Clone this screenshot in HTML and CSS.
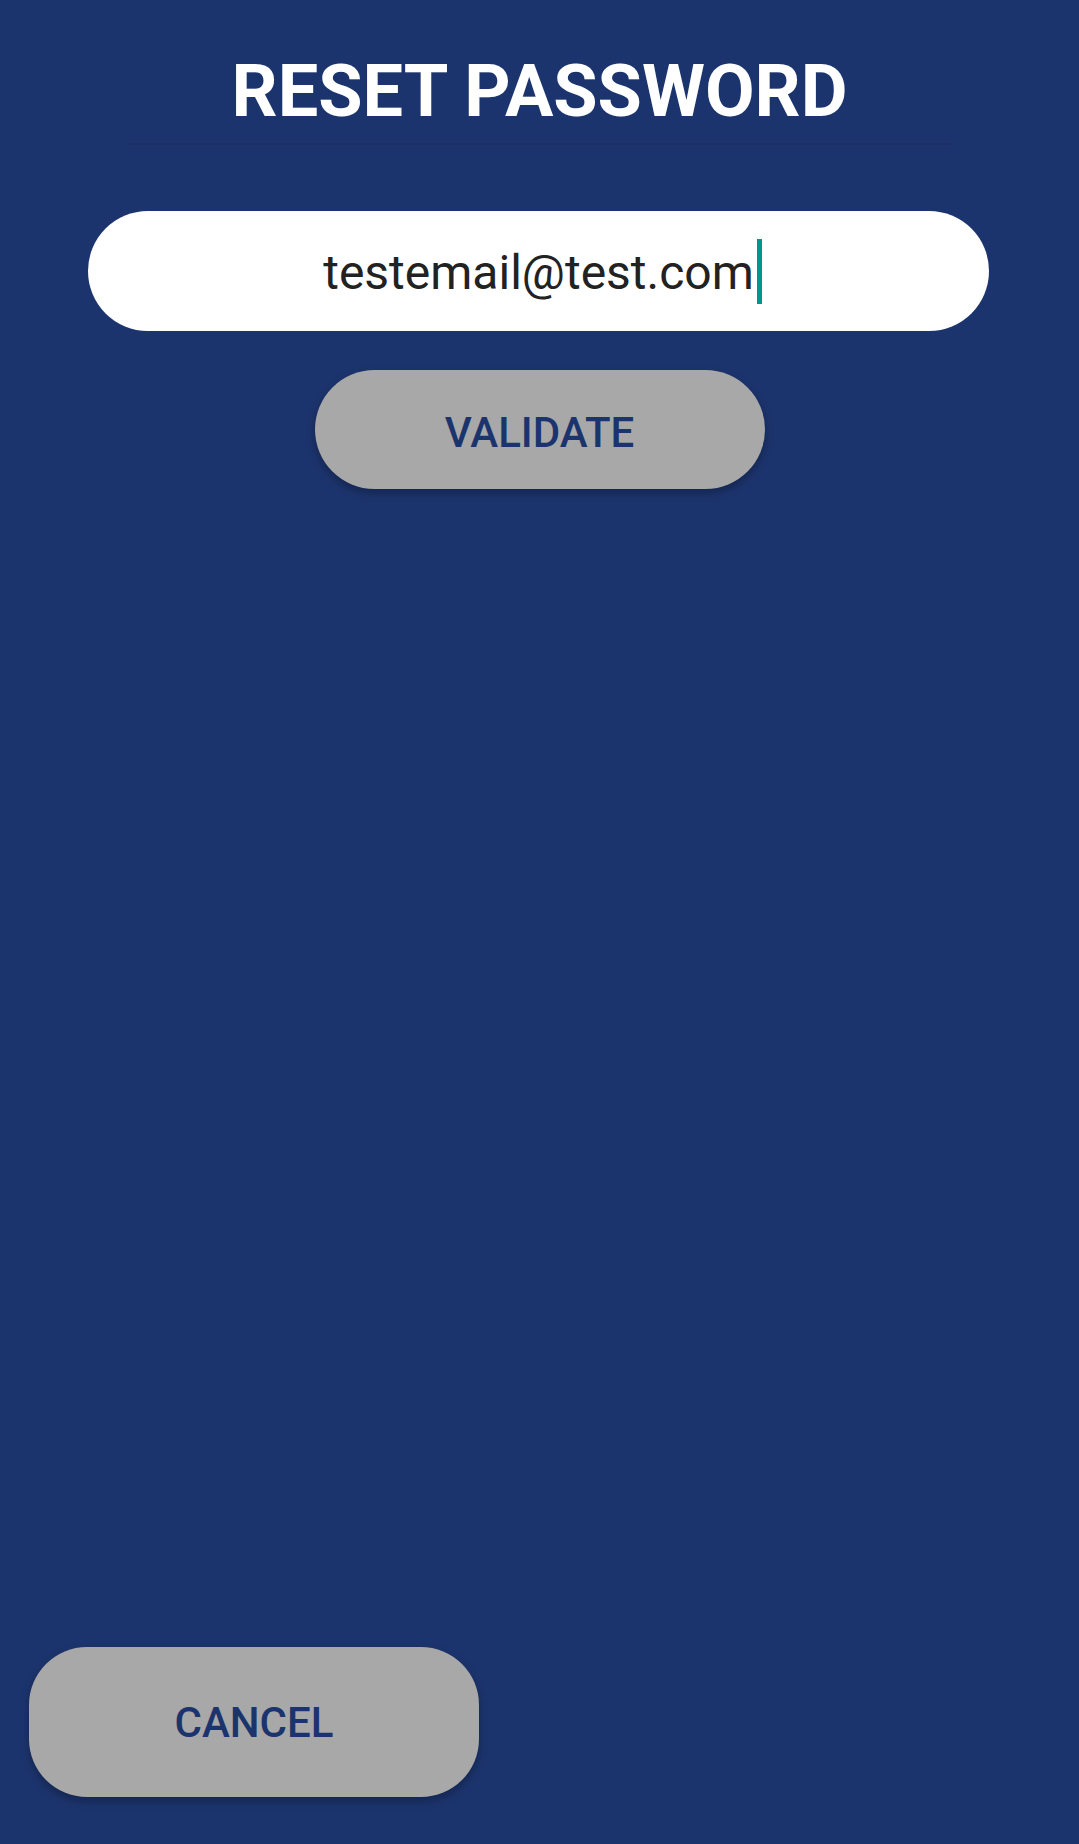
FILE: index.html
```html
<!DOCTYPE html>
<html lang="en">
<head>
<meta charset="utf-8">
<title>Reset Password</title>
<link rel="stylesheet" href="styles.css">
</head>
<body>
<main class="screen">
  <header class="header">
    <h1 class="title">RESET PASSWORD</h1>
    <div class="divider"></div>
  </header>
  <div class="field">
    <span class="field-text">testemail@test.com<span class="caret"></span></span>
  </div>
  <div class="validate-row">
    <button class="btn btn-validate" type="button">VALIDATE</button>
  </div>
  <div class="footer">
    <button class="btn btn-cancel" type="button">CANCEL</button>
  </div>
</main>
</body>
</html>
```

FILE: styles.css
```css
html, body {
  margin: 0;
  padding: 0;
  background: #1c346d;
}

.screen {
  min-height: 1844px;
  display: flex;
  flex-direction: column;
  box-sizing: border-box;
  font-family: Roboto, "Noto Sans", sans-serif;
}

.header {
  display: flex;
  flex-direction: column;
  align-items: center;
  padding-top: 49px;
}

.title {
  margin: 0;
  color: #ffffff;
  font-size: 72px;
  font-weight: 700;
  line-height: 86px;
  letter-spacing: 0;
}

.divider {
  width: 828px;
  height: 2px;
  margin-top: 8px;
  background: rgba(0, 0, 0, 0.07);
}

.field {
  margin: 66px 90px 0 88px;
  height: 120px;
  border-radius: 60px;
  background: #ffffff;
  display: flex;
  align-items: center;
  justify-content: center;
}

.field-text {
  font-size: 48px;
  color: #222222;
  line-height: 56px;
  position: relative;
  top: 2px;
}

.caret {
  position: absolute;
  left: 100%;
  top: -6px;
  margin-left: 3px;
  width: 5px;
  height: 65px;
  background: #009688;
}

.validate-row {
  display: flex;
  justify-content: center;
  margin-top: 39px;
}

.btn {
  border: none;
  background: #a8a8a8;
  color: #1c346d;
  font-family: Roboto, "Noto Sans", sans-serif;
  font-size: 42px;
  font-weight: 500;
  padding: 0;
  width: 450px;
  box-shadow: 0 4px 8px rgba(0, 0, 0, 0.28);
}

.btn-validate {
  height: 119px;
  border-radius: 60px;
  padding-top: 5px;
}

.footer {
  margin-top: auto;
  padding: 0 0 47px 29px;
}

.btn-cancel {
  height: 150px;
  border-radius: 58px;
}
```
